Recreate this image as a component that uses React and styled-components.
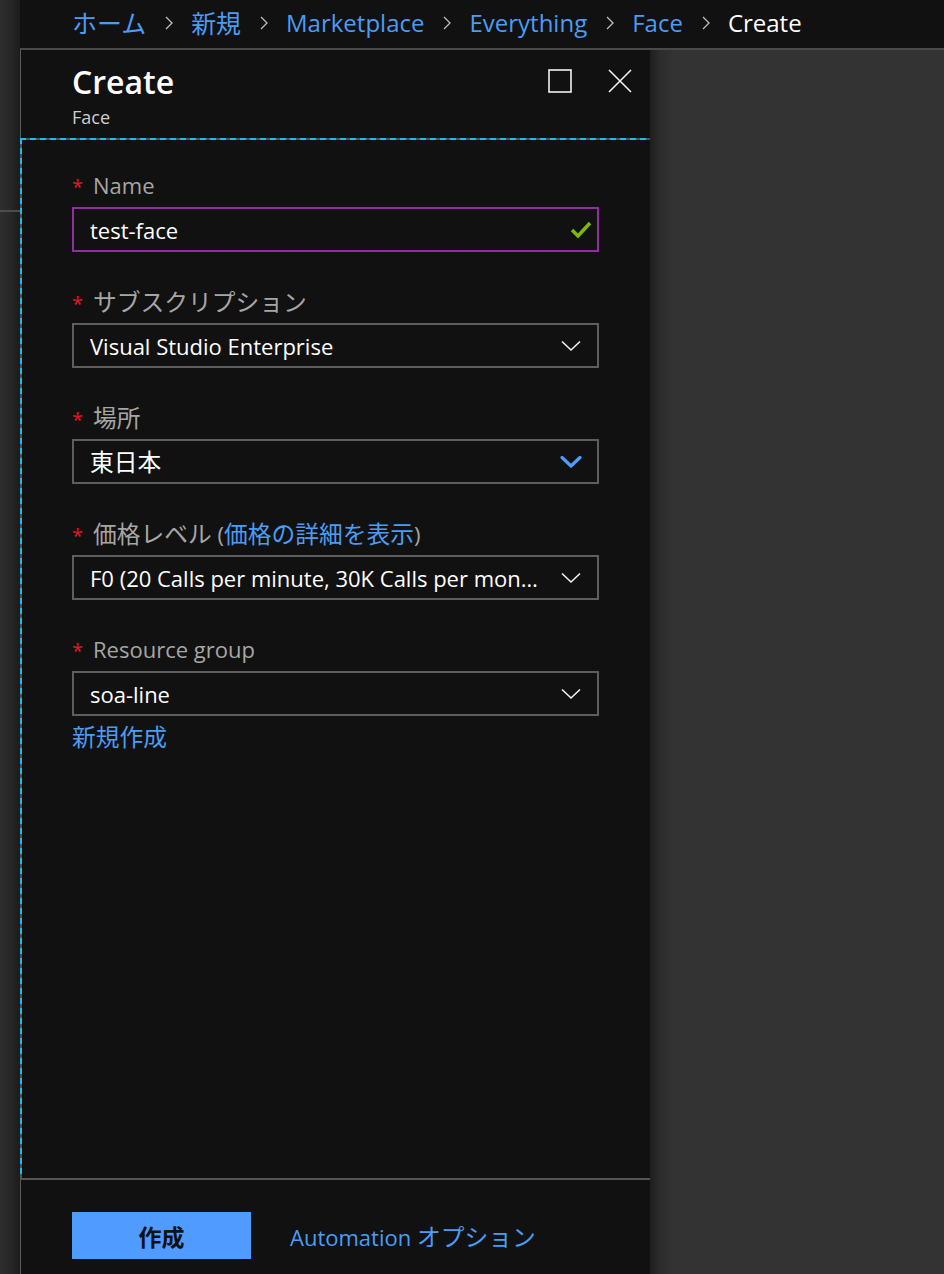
import styled, { createGlobalStyle } from "styled-components";

const GlobalStyle = createGlobalStyle`
  html, body {
    margin: 0;
    padding: 0;
    background: #111111;
  }
  body {
    font-family: "Open Sans", "Noto Sans CJK JP", sans-serif;
  }
`;

const crumbs = [
  { text: "ホーム", jp: true },
  { text: "新規", jp: true },
  { text: "Marketplace" },
  { text: "Everything" },
  { text: "Face" },
];

function Chevron({ color = "#f2f2f2", bold }) {
  return (
    <svg width="22" height="12" viewBox="0 0 22 12">
      <polyline
        points="2,1.5 11,10 20,1.5"
        fill="none"
        stroke={color}
        strokeWidth={bold ? 3.2 : 1.6}
        strokeLinecap={bold ? "round" : "butt"}
        strokeLinejoin={bold ? "round" : "miter"}
      />
    </svg>
  );
}

function Check() {
  return (
    <StatusIcon>
      <svg width="22" height="18" viewBox="0 0 22 18">
        <polyline points="2,9 8,15 20,2" fill="none" stroke="#7fba00" strokeWidth="3.4" />
      </svg>
    </StatusIcon>
  );
}

function CrumbArrow() {
  return (
    <svg width="8" height="14" viewBox="0 0 8 14">
      <polyline points="1,1 7,7 1,13" fill="none" stroke="#bdbdbd" strokeWidth="1.3" />
    </svg>
  );
}

function Field({ label, link, children }) {
  return (
    <FieldBlock>
      <Label>
        <Star>*</Star>
        <span>
          {label}
          {link && (
            <>
              {" ("}
              <InlineLink>{link}</InlineLink>
              {")"}
            </>
          )}
        </span>
      </Label>
      {children}
    </FieldBlock>
  );
}

export default function App() {
  return (
    <>
      <GlobalStyle />
      <Shell>
        <Rail>
          <RailDivider />
        </Rail>
        <Main>
          <Breadcrumb>
            {crumbs.map((c) => (
              <Crumb key={c.text}>
                <CrumbLink>{c.jp ? <Jp $size="1.04em">{c.text}</Jp> : c.text}</CrumbLink>
                <CrumbSep>
                  <CrumbArrow />
                </CrumbSep>
              </Crumb>
            ))}
            <CrumbCurrent>Create</CrumbCurrent>
          </Breadcrumb>
          <Body>
            <Blade>
              <BladeHeader>
                <div>
                  <Title>Create</Title>
                  <Subtitle>Face</Subtitle>
                </div>
                <HeaderActions>
                  <IconButton>
                    <svg width="24" height="24" viewBox="0 0 24 24">
                      <rect x="1" y="1" width="22" height="22" fill="none" stroke="#f2f2f2" strokeWidth="1.6" />
                    </svg>
                  </IconButton>
                  <IconButton>
                    <svg width="24" height="24" viewBox="0 0 24 24">
                      <path d="M1 1 L23 23 M23 1 L1 23" fill="none" stroke="#f2f2f2" strokeWidth="1.6" />
                    </svg>
                  </IconButton>
                </HeaderActions>
              </BladeHeader>
              <Content>
                <Field label="Name">
                  <Box $focus>
                    <BoxText>test-face</BoxText>
                    <Check />
                  </Box>
                </Field>
                <Field label={<Jp>サブスクリプション</Jp>}>
                  <Box>
                    <BoxText>Visual Studio Enterprise</BoxText>
                    <Chevron />
                  </Box>
                </Field>
                <Field label={<Jp>場所</Jp>}>
                  <Box>
                    <BoxText>
                      <Jp>東日本</Jp>
                    </BoxText>
                    <Chevron color="#4f9bff" bold />
                  </Box>
                </Field>
                <Field label={<Jp>価格レベル</Jp>} link={<Jp>価格の詳細を表示</Jp>}>
                  <Box>
                    <BoxText>F0 (20 Calls per minute, 30K Calls per month)</BoxText>
                    <Chevron />
                  </Box>
                </Field>
                <Field label="Resource group">
                  <Box>
                    <BoxText>soa-line</BoxText>
                    <Chevron />
                  </Box>
                  <CreateLink>
                    <Jp>新規作成</Jp>
                  </CreateLink>
                </Field>
              </Content>
              <Footer>
                <PrimaryButton>作成</PrimaryButton>
                <FooterLink>
                  Automation <Jp>オプション</Jp>
                </FooterLink>
              </Footer>
            </Blade>
            <Backdrop />
          </Body>
        </Main>
      </Shell>
    </>
  );
}

const Shell = styled.div`
  display: grid;
  grid-template-columns: 20px 1fr;
  height: 100vh;
  min-height: 1274px;
  background: #111111;
  overflow: hidden;
`;

const Rail = styled.div`
  background: linear-gradient(90deg, #2e2e2e 0%, #262626 60%, #1c1c1c 100%);
  padding-top: 210px;
`;

const RailDivider = styled.div`
  height: 2px;
  background: #4d4d4d;
`;

const Main = styled.div`
  display: flex;
  flex-direction: column;
  min-width: 0;
`;

const Jp = styled.span`
  font-family: "Noto Sans CJK JP", sans-serif;
  font-size: ${(p) => p.$size || "1.08em"};
`;

const Breadcrumb = styled.nav`
  height: 50px;
  box-sizing: border-box;
  padding: 0 0 4px 52px;
  border-bottom: 2px solid #4a4a4a;
  display: flex;
  align-items: center;
  font-size: 24px;
  white-space: nowrap;
  overflow: hidden;
`;

const Crumb = styled.span`
  display: flex;
  align-items: center;
`;

const CrumbLink = styled.span`
  color: #4a9cf5;
`;

const CrumbSep = styled.span`
  display: flex;
  margin: 2px 18px 0 19px;
`;

const CrumbCurrent = styled.span`
  color: #ffffff;
`;

const Body = styled.div`
  flex: 1;
  display: flex;
`;

const Blade = styled.section`
  width: 629px;
  border-left: 1px solid #5a5a5a;
  background: #111111;
  display: flex;
  flex-direction: column;
`;

const BladeHeader = styled.header`
  height: 88px;
  display: flex;
  justify-content: space-between;
  padding: 0 18px 0 51px;
  box-sizing: border-box;
`;

const Title = styled.h1`
  margin: 10px 0 0;
  font-size: 32px;
  font-weight: 600;
  color: #ffffff;
  line-height: 44px;
`;

const Subtitle = styled.div`
  font-size: 18px;
  color: #cfcfcf;
  line-height: 22px;
  margin-top: 2px;
`;

const HeaderActions = styled.div`
  display: flex;
  gap: 36px;
  padding-top: 19px;
`;

const IconButton = styled.span`
  display: block;
  width: 24px;
  height: 24px;
`;

const Content = styled.div`
  flex: 1;
  margin-left: -1px;
  padding: 34px 51px 0 52px;
  background:
    repeating-linear-gradient(90deg, #1ebbee 0 6px, #555555 6px 10px) top left / 100% 2px no-repeat,
    repeating-linear-gradient(180deg, #1ebbee 0 6px, #555555 6px 10px) top left / 2px 100% no-repeat;
  display: flex;
  flex-direction: column;
  gap: 36px;
`;

const FieldBlock = styled.div`
  display: flex;
  flex-direction: column;
`;

const Label = styled.label`
  display: flex;
  align-items: baseline;
  gap: 10px;
  height: 26px;
  font-size: 22px;
  line-height: 26px;
  color: #a6a6a6;
  margin-bottom: 9px;
  white-space: nowrap;
`;

const Star = styled.span`
  color: #e81123;
  font-size: 20px;
`;

const InlineLink = styled.span`
  color: #4a9cf5;
`;

const Box = styled.div`
  height: 45px;
  box-sizing: border-box;
  border: 2px solid ${(p) => (p.$focus ? "#8f2fa0" : "#5e5e5e")};
  display: flex;
  align-items: center;
  gap: 18px;
  padding: 0 15px 0 16px;
`;

const BoxText = styled.span`
  flex: 1;
  min-width: 0;
  font-size: 22px;
  line-height: 36px;
  color: #ffffff;
  white-space: nowrap;
  overflow: hidden;
  text-overflow: ellipsis;
`;

const StatusIcon = styled.span`
  display: flex;
  margin-right: -10px;
`;

const CreateLink = styled.a`
  margin-top: 6px;
  font-size: 22px;
  line-height: 28px;
  color: #4a9cf5;
`;

const Footer = styled.footer`
  height: 96px;
  box-sizing: border-box;
  border-top: 2px solid #555555;
  margin-left: -1px;
  display: flex;
  align-items: flex-start;
  gap: 39px;
  padding: 32px 0 0 52px;
`;

const PrimaryButton = styled.button`
  width: 179px;
  height: 47px;
  border: none;
  background: #4f9bff;
  color: #111111;
  font-family: "Noto Sans CJK JP", sans-serif;
  font-size: 23px;
  font-weight: 700;
`;

const FooterLink = styled.a`
  font-size: 22px;
  line-height: 47px;
  color: #4a9cf5;
`;

const Backdrop = styled.div`
  flex: 1;
  background: linear-gradient(90deg, #1e1e1e 0px, #2c2c2c 10px, #333333 24px);
`;
